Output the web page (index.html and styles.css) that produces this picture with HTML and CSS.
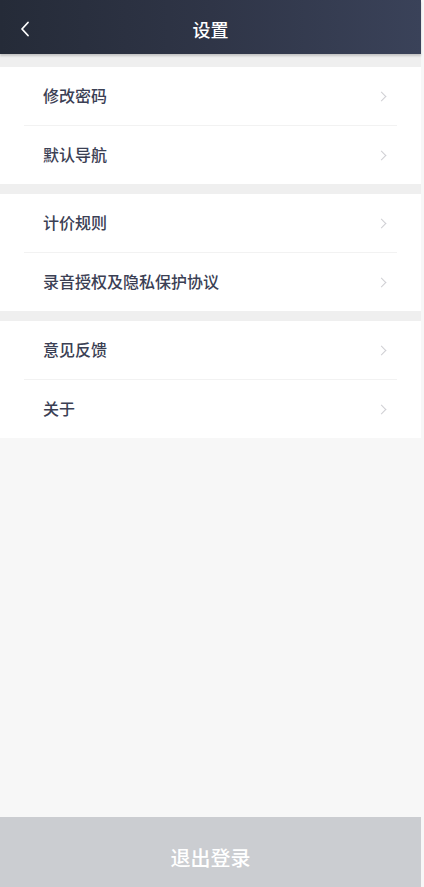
FILE: index.html
```html
<!DOCTYPE html>
<html lang="zh-CN">
<head>
  <meta charset="UTF-8">
  <meta name="viewport" content="width=device-width, initial-scale=1.0">
  <title>设置</title>
  <link rel="stylesheet" href="styles.css">
</head>
<body>
  <div class="page">
    <header class="topbar">
      <span class="back">
        <svg width="10" height="16" viewBox="0 0 10 16"><path d="M8 1.5 L2 8 L8 14.5" fill="none" stroke="#fff" stroke-width="1.8" stroke-linecap="round" stroke-linejoin="round"/></svg>
      </span>
      <h1>设置</h1>
    </header>

    <div class="content">
      <div class="group">
        <div class="row"><span>修改密码</span><i class="arrow"></i></div>
        <div class="row"><span>默认导航</span><i class="arrow"></i></div>
      </div>
      <div class="group">
        <div class="row"><span>计价规则</span><i class="arrow"></i></div>
        <div class="row"><span>录音授权及隐私保护协议</span><i class="arrow"></i></div>
      </div>
      <div class="group">
        <div class="row"><span>意见反馈</span><i class="arrow"></i></div>
        <div class="row"><span>关于</span><i class="arrow"></i></div>
      </div>
      <div class="filler"></div>
    </div>

    <button class="logout">退出登录</button>
  </div>
</body>
</html>
```

FILE: styles.css
```css
html {
  background-color: #f7f7f7;
}
body {
  margin: 0;
  font-family: "Noto Sans CJK SC", "Noto Sans", sans-serif;
}
.page {
  width: 421px;
  height: 887px;
  display: flex;
  flex-direction: column;
  background-color: #efefef;
}
.topbar {
  height: 54px;
  flex-shrink: 0;
  display: flex;
  align-items: center;
  justify-content: center;
  position: relative;
  background: linear-gradient(90deg, #252b38 0%, #2f3547 50%, #3a4259 100%);
  box-shadow: 0 2px 2px rgba(0, 0, 0, 0.18);
}
.topbar h1 {
  margin: 0;
  font-size: 18px;
  font-weight: 500;
  color: #fff;
  line-height: 1;
  padding-top: 3px;
}
.back {
  position: absolute;
  left: 20px;
  top: 21px;
  display: flex;
}
.content {
  flex: 1;
  display: flex;
  flex-direction: column;
  gap: 10px;
  padding-top: 13px;
}
.group {
  background-color: #fff;
  padding: 0 24px;
}
.row {
  height: 58px;
  display: flex;
  align-items: center;
  justify-content: space-between;
  padding: 0 12px 0 19px;
  font-size: 16px;
  font-weight: 500;
  color: #3b4054;
}
.row + .row {
  border-top: 1px solid #f2f2f2;
}
.row span {
  padding-bottom: 2px;
}
.arrow {
  width: 6px;
  height: 6px;
  border-top: 1px solid #cfcfd3;
  border-right: 1px solid #cfcfd3;
  transform: rotate(45deg);
}
.filler {
  flex: 1;
  margin-top: -10px;
  background-color: #f7f7f7;
}
.logout {
  height: 70px;
  flex-shrink: 0;
  border: none;
  background-color: #cbcdd1;
  color: #fff;
  font-family: inherit;
  font-size: 20px;
  font-weight: 500;
  padding-top: 12px;
}
```
